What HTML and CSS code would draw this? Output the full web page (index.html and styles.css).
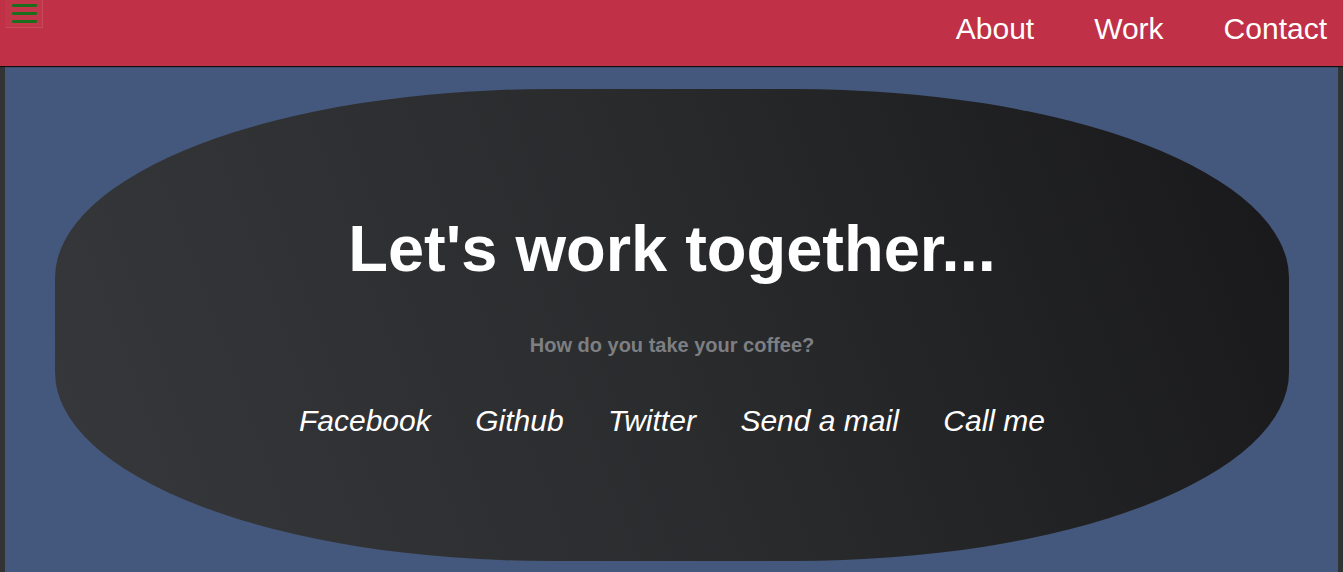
FILE: index.html
```html
<!DOCTYPE html>
<html lang="en">
<head>
<meta charset="utf-8">
<title>Contact</title>
<link rel="stylesheet" href="styles.css">
</head>
<body>
<header class="topbar">
  <button class="burger" aria-label="Menu">
    <span class="bar"></span>
    <span class="bar"></span>
    <span class="bar"></span>
  </button>
  <nav class="nav">
    <a href="#" class="nav-link">About</a>
    <a href="#" class="nav-link">Work</a>
    <a href="#" class="nav-link">Contact</a>
  </nav>
</header>
<main class="main">
  <section class="oval">
    <h1 class="title">Let's work together...</h1>
    <p class="subtitle">How do you take your coffee?</p>
    <ul class="links">
      <li><a href="#" class="link">Facebook</a></li>
      <li><a href="#" class="link">Github</a></li>
      <li><a href="#" class="link">Twitter</a></li>
      <li><a href="#" class="link">Send a mail</a></li>
      <li><a href="#" class="link">Call me</a></li>
    </ul>
  </section>
</main>
</body>
</html>
```

FILE: styles.css
```css
html, body {
  margin: 0;
  padding: 0;
}
body {
  background: #333335;
  font-family: "Liberation Sans", Arial, sans-serif;
  min-height: 100vh;
  display: flex;
  flex-direction: column;
}
.topbar {
  height: 66px;
  background: #c03046;
  display: flex;
  justify-content: space-between;
  align-items: flex-start;
  box-shadow: 0 1px 1px rgba(0, 0, 0, 0.7);
  position: relative;
  z-index: 1;
}
.burger {
  margin: 0 0 0 5px;
  width: 38px;
  height: 28px;
  padding: 4px 0 0 7px;
  box-sizing: border-box;
  background: #c13649;
  border: none;
  border-right: 1px solid #c9485b;
  border-bottom: 1px solid #c9485b;
  display: flex;
  flex-direction: column;
  gap: 5px;
  cursor: pointer;
}
.bar {
  display: block;
  width: 25px;
  height: 3px;
  background: #1c6d1c;
  border-radius: 1px;
}
.nav {
  display: flex;
  gap: 60px;
  padding: 12px 16px 0 0;
}
.nav-link {
  color: #ffffff;
  text-decoration: none;
  font-size: 30px;
  line-height: 34px;
}
.main {
  flex: 1;
  margin: 1px 5px 0 5px;
  background: #44577c;
  padding: 22px 49px 30px 50px;
}
.oval {
  height: 472px;
  border-radius: 40%;
  background: linear-gradient(70deg, #37383b 0%, #2a2b2d 50%, #18181a 100%);
  display: flex;
  flex-direction: column;
  align-items: center;
  justify-content: center;
  text-align: center;
}
.title {
  margin: 0 0 48px 0;
  color: #ffffff;
  font-size: 65px;
  line-height: 74px;
  font-weight: bold;
}
.subtitle {
  margin: 0 0 47px 0;
  color: #7d7f82;
  font-size: 20px;
  line-height: 23px;
  font-weight: bold;
}
.links {
  list-style: none;
  margin: 0;
  padding: 0;
  display: flex;
  gap: 44.5px;
}
.link {
  color: #ffffff;
  text-decoration: none;
  font-style: italic;
  font-size: 30px;
  line-height: 34px;
}
```
